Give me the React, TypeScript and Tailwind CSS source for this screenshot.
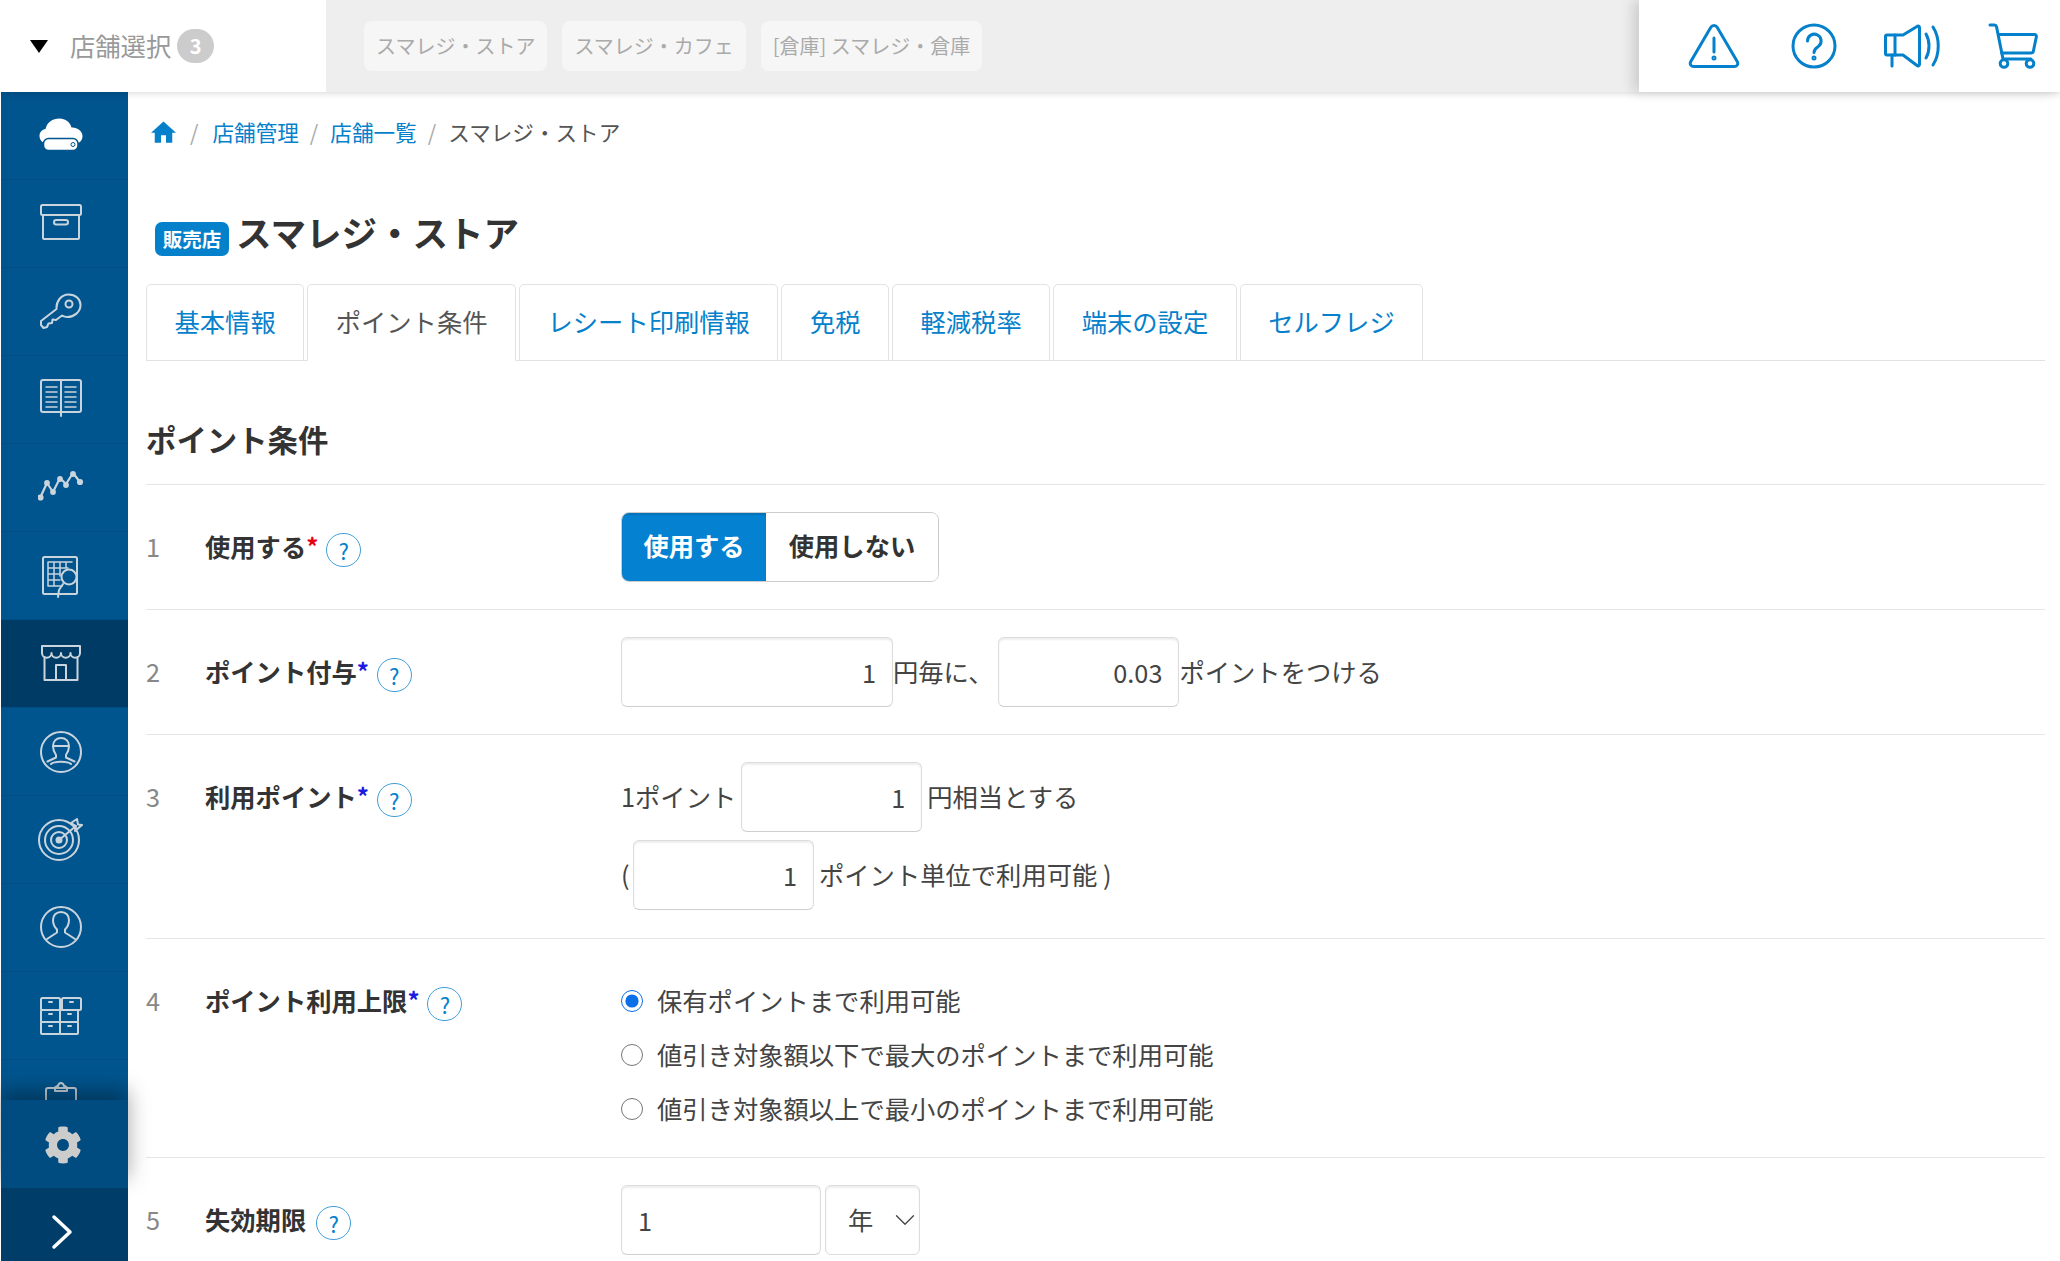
import { ChevronDown } from 'lucide-react'
import { FaCog } from 'react-icons/fa'
import type { ReactNode } from 'react'

const stores = ['スマレジ・ストア', 'スマレジ・カフェ', '[倉庫] スマレジ・倉庫']
const tabs = ['基本情報', 'ポイント条件', 'レシート印刷情報', '免税', '軽減税率', '端末の設定', 'セルフレジ']

function SideSvg({ w, h, children }: { w: number; h: number; children: ReactNode }) {
  return (
    <svg width={w} height={h} viewBox={`0 0 ${w} ${h}`} fill="none" stroke="currentColor" strokeWidth="2" strokeLinecap="round" strokeLinejoin="round">
      {children}
    </svg>
  )
}

const sideIcons: { key: string; pad: string; active?: boolean; white?: boolean; node: ReactNode }[] = [
  {
    key: 'cloud',
    pad: 'pb-[2px]',
    white: true,
    node: (
      <svg width="44" height="33" viewBox="0 0 44 33">
        <path fill="currentColor" d="M7 25C3 25 .5 21.500.5 18c0-4 2.500-6.500 6-7C8 4.500 13.500.5 20.500.5c6 0 10.500 3.500 12 9 5.500-.5 11 3.500 11 8.500 0 3.500-2 7-6 7z" />
        <rect x="4.500" y="20.500" width="34.500" height="12" rx="5" fill="currentColor" stroke="#00558f" strokeWidth="1.500" />
        <circle cx="34" cy="26.500" r="2" fill="none" stroke="#00558f" strokeWidth="1" />
      </svg>
    ),
  },
  {
    key: 'box',
    pad: 'pb-[4px]',
    node: (
      <SideSvg w={42} h={36}>
        <rect x="1" y="1" width="40" height="10" rx="1.500" />
        <rect x="3" y="11" width="36" height="24" rx="1" />
        <rect x="14" y="16" width="14" height="4.500" rx="2.200" />
      </SideSvg>
    ),
  },
  {
    key: 'key',
    pad: 'pb-[2px]',
    node: (
      <SideSvg w={42} h={36}>
        <path d="M16.500 16C16 8 21.500 1.500 28.500 1.500c7 0 12 4.500 12 10.500 0 7-6.500 12-13 12-2 0-4-.5-5.500-1.500L16 27l-3.500-.5-.5 3.500-3.500.5L7 34l-3.500 1L1 32v-4z" />
        <circle cx="29" cy="11" r="3.500" />
      </SideSvg>
    ),
  },
  {
    key: 'book',
    pad: 'pb-[4px]',
    node: (
      <SideSvg w={42} h={38}>
        <rect x="1" y="1" width="40" height="32" rx="2" />
        <path d="M21 1v36" />
        <path strokeWidth="1.500" d="M6 8h11M6 13h11M6 18h11M6 23h11M6 28h11M25 8h11M25 13h11M25 18h11M25 23h11M25 28h11" />
      </SideSvg>
    ),
  },
  {
    key: 'chart',
    pad: 'pb-[4px]',
    node: (
      <svg width="46" height="30" viewBox="0 0 46 30" fill="currentColor" stroke="currentColor" strokeWidth="2.200" strokeLinejoin="round">
        <path fill="none" d="M2 27 9 12l6 9 7-14 6 6 7-11 7 9" />
        <circle cx="2.500" cy="26.500" r="2" />
        <circle cx="9" cy="12" r="1.800" />
        <circle cx="15" cy="21" r="1.800" />
        <circle cx="22" cy="8" r="1.800" />
        <circle cx="28" cy="14" r="1.800" />
        <circle cx="35" cy="3" r="1.800" />
        <circle cx="42" cy="11" r="2" />
      </svg>
    ),
  },
  {
    key: 'report',
    pad: 'pt-[2px]',
    node: (
      <SideSvg w={38} h={42}>
        <rect x="1" y="1" width="34" height="37" rx="1.500" />
        <path strokeWidth="1.500" d="M6 6h24M6 6v24h14M6 12h20M6 18h12M6 24h12M12 6v24M18 6v14M24 6v6" />
        <circle cx="27" cy="21" r="7.500" fill="#00558f" />
        <path d="M21 28l-4 6-1 7" />
      </SideSvg>
    ),
  },
  {
    key: 'store',
    pad: 'pb-[2px]',
    active: true,
    node: (
      <SideSvg w={40} h={38}>
        <path d="M1 2h38v7a4.700 4.700 0 0 1-9.500 0 4.700 4.700 0 0 1-9.500 0 4.700 4.700 0 0 1-9.500 0A4.700 4.700 0 0 1 1 9z" />
        <path d="M3.500 13v23h33V13" />
        <path d="M15 36V21h10v15" />
      </SideSvg>
    ),
  },
  {
    key: 'user',
    pad: 'pb-0',
    node: (
      <SideSvg w={42} h={42}>
        <circle cx="21" cy="21" r="20" />
        <path d="M13 15c0-5 3.500-8 8-8s8 3 8 8c0 4-1.500 7-3 9v2.500l8.500 4M13 15h16M13 15c0 4 1.500 7 3 9v2.500l-8.500 4M11 33c3-3 17-3 20 0" />
      </SideSvg>
    ),
  },
  {
    key: 'target',
    pad: 'pb-0',
    node: (
      <SideSvg w={46} h={43}>
        <circle cx="21" cy="22" r="20" />
        <circle cx="21" cy="22" r="14" />
        <circle cx="21" cy="22" r="8" />
        <circle cx="21" cy="22" r="2.500" fill="currentColor" />
        <path d="M21 22 38 8M33 5l5 3-1 5 7-6-4-.5L39 1z" />
      </SideSvg>
    ),
  },
  {
    key: 'users',
    pad: 'pb-[2px]',
    node: (
      <SideSvg w={42} h={43}>
        <circle cx="21" cy="22" r="20" />
        <path d="M21 7c-5 0-8 3.500-8 8 0 4 1.500 7 4 9.500v3L7 34M21 7c5 0 8 3.500 8 8 0 4-1.500 7-4 9.500v3L35 34" />
      </SideSvg>
    ),
  },
  {
    key: 'grid',
    pad: 'pb-0',
    node: (
      <SideSvg w={42} h={38}>
        <rect x="1" y="1" width="19" height="12" rx="1.500" />
        <rect x="22" y="1" width="19" height="12" rx="1.500" />
        <rect x="1" y="13" width="19" height="12" rx="1" />
        <rect x="20" y="13" width="18" height="12" rx="1" />
        <rect x="1" y="25" width="19" height="12" rx="1" />
        <rect x="20" y="25" width="18" height="12" rx="1" />
        <path d="M9 5h3M30 5h3M9 17h3M28 17h3M9 29h3M28 29h3" />
      </SideSvg>
    ),
  },
  {
    key: 'clipboard',
    pad: 'pb-[4px]',
    node: (
      <SideSvg w={34} h={40}>
        <rect x="2" y="6" width="30" height="33" rx="2" />
        <path d="M11 6c0-1 1-1.500 3-2 .5-2 1.500-3 3-3s2.500 1 3 3c2 .5 3 1 3 2v3H11zM8 20h18" />
      </SideSvg>
    ),
  },
]

function HelpBadge() {
  return (
    <span className="mt-[6px] flex h-[34px] w-[35px] shrink-0 items-center justify-center rounded-full border border-[#3f9fd9] text-[22px] leading-none text-[#0581cc]">
      ?
    </span>
  )
}

function FieldLabel({ no, text, mark }: { no: number; text: string; mark?: 'red' | 'blue' }) {
  return (
    <div className="flex h-[70px] w-[475px] shrink-0 items-center">
      <span className="w-[59px] text-[#888]">{no}</span>
      <span className="font-bold text-[#333]">{text}</span>
      {mark === 'red' && <span className="mb-[2px] w-[10px] text-[24px] font-bold leading-none text-[#e60012]">*</span>}
      {mark === 'blue' && <span className="mb-[2px] w-[10px] text-[24px] font-bold leading-none text-[#1a1ae0]">*</span>}
      <span className="w-[10px]" />
      <HelpBadge />
    </div>
  )
}

function NumInput({ value, width, left }: { value: string; width: string; left?: boolean }) {
  return (
    <input
      readOnly
      value={value}
      className={`h-[70px] ${width} rounded-[6px] border border-[#dcdcdc] border-b-[#cfcfcf] bg-white px-[16px] text-[25.3px] text-[#444] shadow-[inset_0_2px_2px_rgba(0,0,0,0.07)] outline-none ${left ? 'text-left' : 'text-right'}`}
    />
  )
}

function Radio({ label, checked }: { label: string; checked?: boolean }) {
  return (
    <label className="flex h-[54px] items-center gap-[14px]">
      <input type="radio" name="limit" defaultChecked={checked} className="m-0 h-[22px] w-[22px] accent-[#0b6fe8]" />
      <span>{label}</span>
    </label>
  )
}

export default function App() {
  return (
    <div className="flex h-[1261px] w-[2060px] flex-col overflow-hidden bg-white font-['Noto_Sans_CJK_JP',sans-serif] text-[25.3px] text-[#444]">
      <header className="relative z-20 flex h-[92px] shrink-0 bg-[#eeeeee] shadow-[0_1px_7px_rgba(0,0,0,0.16)]">
        <div className="flex w-[326px] items-center bg-white pl-[30px]">
          <svg width="18" height="13" viewBox="0 0 18 13" className="mr-[22px]">
            <path d="M0 0h18L9 13z" fill="#000" />
          </svg>
          <span className="mr-[6px] text-[#999]">店舗選択</span>
          <span className="flex h-[34px] w-[37px] items-center justify-center rounded-full bg-[#cccccc] text-[20px] font-bold text-white">3</span>
        </div>
        <div className="flex flex-1 items-center gap-[15px] pl-[38px]">
          {stores.map((s) => (
            <span key={s} className="flex h-[50px] items-center rounded-[8px] bg-[#f6f6f6] px-[12px] text-[20px] text-[#aaaaaa]">
              {s}
            </span>
          ))}
        </div>
        <div className="relative flex w-[421px] items-center bg-white pl-[49px] text-[#0581cc] shadow-[-6px_0_12px_rgba(0,0,0,0.14)]">
          <svg width="52" height="46" viewBox="0 0 52 46" fill="none" stroke="currentColor" strokeWidth="3" strokeLinecap="round" strokeLinejoin="round" className="mr-[51px]">
            <path d="M26 2.500c-1.500 0-2.600.8-3.300 2L2.800 38.500c-1.500 2.600.3 5 3 5h40.400c2.700 0 4.500-2.400 3-5L29.300 4.500c-.7-1.200-1.800-2-3.300-2z" />
            <path d="M26 15v14" />
            <circle cx="26" cy="35" r="1" />
          </svg>
          <svg width="46" height="46" viewBox="0 0 46 46" fill="none" stroke="currentColor" strokeWidth="3" strokeLinecap="round" strokeLinejoin="round" className="mr-[47px]">
            <circle cx="23" cy="23" r="21" />
            <path d="M16.500 18a6.800 6.800 0 1 1 10.500 5.700c-2.400 1.600-4 2.800-4 5.800" />
            <circle cx="23" cy="35" r="1" />
          </svg>
          <svg width="60" height="44" viewBox="0 0 60 44" fill="none" stroke="currentColor" strokeWidth="3" strokeLinecap="round" strokeLinejoin="round" className="mr-[44px]">
            <path d="M3 11h16L33 2.500c1-.8 2.500-.3 2.500 1.200v36.600c0 1.500-1.500 2-2.500 1.200L19 31H3c-.8 0-1.500-.7-1.500-1.500v-17C1.500 11.700 2.200 11 3 11z" />
            <path d="M11 11v20M8 31v11" />
            <path d="M42 10c4 7 4 17 0 24M49 3c7 11 7 27 0 38" />
          </svg>
          <svg width="51" height="46" viewBox="0 0 51 46" fill="none" stroke="currentColor" strokeWidth="3" strokeLinecap="round" strokeLinejoin="round">
            <path d="M2 2h4.500c1 0 1.700.6 2 1.600L15 36h28" />
            <path d="M10.500 11.500h36c1.400 0 2.200 1.200 1.800 2.500l-3 14.500c-.3 1-1 1.500-2 1.500H13.800" />
            <circle cx="16" cy="40.500" r="3.800" />
            <circle cx="42" cy="40.500" r="3.800" />
          </svg>
        </div>
      </header>

      <div className="flex min-h-0 flex-1">
        <aside className="ml-px flex w-[127px] shrink-0 flex-col bg-[#00558f] text-[#c9d4dd]">
          <nav className="h-[1008px] shrink-0 overflow-hidden">
            {sideIcons.map((item) => (
              <div
                key={item.key}
                className={`flex h-[88px] items-center justify-center border-b border-[#004f86] pr-[7px] ${item.pad} ${item.active ? 'bg-[#003b66]' : ''} ${item.white ? 'text-white' : ''}`}
              >
                {item.node}
              </div>
            ))}
          </nav>
          <div className="relative z-10 flex h-[88px] shrink-0 items-center justify-center bg-[#004c80] pt-[2px] pr-[3px] text-[#cccccc] shadow-[0_-10px_20px_rgba(0,0,0,0.35)]">
            <FaCog size={38} />
          </div>
          <div className="relative z-10 flex h-[88px] shrink-0 items-center justify-center bg-[#003d69] pr-[6px]">
            <svg width="22" height="36" viewBox="0 0 22 36" fill="none" stroke="#ffffff" strokeWidth="3.500" strokeLinecap="round" strokeLinejoin="round">
              <path d="M3 3l16 15L3 33" />
            </svg>
          </div>
        </aside>

        <main className="min-w-0 flex-1 pl-[18px] pr-[15px]">
          <nav className="mt-[25px] flex h-[30px] items-center pl-[5px] text-[21.6px]">
            <svg width="25" height="22" viewBox="2 3 20 17" fill="#0581cc" className="mr-[14px]">
              <path d="M10 20v-6h4v6h5v-8h3L12 3 2 12h3v8z" />
            </svg>
            <span className="mr-[14px] text-[#aaaaaa]">/</span>
            <span className="mr-[11px] text-[#0581cc]">店舗管理</span>
            <span className="mr-[12px] text-[#aaaaaa]">/</span>
            <span className="mr-[11px] text-[#0581cc]">店舗一覧</span>
            <span className="mr-[12px] text-[#aaaaaa]">/</span>
            <span className="text-[#555555]">スマレジ・ストア</span>
          </nav>

          <div className="mt-[60px] flex h-[50px] items-center pl-[9px]">
            <span className="mt-[13px] mr-[7px] flex h-[34px] w-[74px] items-center justify-center rounded-[7px] bg-[#0581cc] text-[19.500px] font-bold text-white">販売店</span>
            <h1 className="text-[35.500px] font-bold text-[#333333]">スマレジ・ストア</h1>
          </div>

          <div className="mt-[27px] flex gap-[3px] border-b border-[#e2e2e2]">
            {tabs.map((t, i) => (
              <div
                key={t}
                className={`-mb-px flex h-[77px] items-center rounded-t-[5px] border border-[#e2e2e2] px-[27.5px] pb-[2px] ${i === 1 ? 'border-b-white text-[#555555]' : 'text-[#0581cc]'}`}
              >
                {t}
              </div>
            ))}
          </div>

          <h2 className="mt-[57px] mb-[22px] flex h-[44px] items-center text-[30.400px] font-bold text-[#333333]">ポイント条件</h2>

          <section className="flex border-t border-[#e6e6e6] pt-[27px] pb-[27px]">
            <FieldLabel no={1} text="使用する" mark="red" />
            <div className="flex h-[70px] w-[318px] overflow-hidden rounded-[8px] border border-[#cccccc]">
              <button className="w-[144px] bg-[#0482d1] pb-[2px] font-bold text-white shadow-[inset_0_2px_2px_rgba(0,0,0,0.12)]">使用する</button>
              <button className="flex-1 bg-white pb-[2px] font-bold text-[#333333]">使用しない</button>
            </div>
          </section>

          <section className="flex border-t border-[#e6e6e6] pt-[27px] pb-[27px]">
            <FieldLabel no={2} text="ポイント付与" mark="blue" />
            <div className="flex items-center">
              <NumInput value="1" width="w-[272px]" />
              <span>円毎に、</span>
              <span className="w-[5px]" />
              <NumInput value="0.03" width="w-[181px]" />
              <span>ポイントをつける</span>
            </div>
          </section>

          <section className="flex border-t border-[#e6e6e6] pt-[27px] pb-[28px]">
            <FieldLabel no={3} text="利用ポイント" mark="blue" />
            <div className="flex flex-col gap-[8px]">
              <div className="flex items-center gap-[5px]">
                <span>1ポイント</span>
                <NumInput value="1" width="w-[181px]" />
                <span>円相当とする</span>
              </div>
              <div className="flex items-center gap-[5px]">
                <span className="w-[7px]">(</span>
                <NumInput value="1" width="w-[181px]" />
                <span>ポイント単位で利用可能 )</span>
              </div>
            </div>
          </section>

          <section className="flex border-t border-[#e6e6e6] pt-[27px] pb-[21px]">
            <FieldLabel no={4} text="ポイント利用上限" mark="blue" />
            <div className="mt-[8px] flex flex-col">
              <Radio checked label="保有ポイントまで利用可能" />
              <Radio label="値引き対象額以下で最大のポイントまで利用可能" />
              <Radio label="値引き対象額以上で最小のポイントまで利用可能" />
            </div>
          </section>

          <section className="flex border-t border-[#e6e6e6] pt-[27px]">
            <FieldLabel no={5} text="失効期限" />
            <div className="flex items-center gap-[4px]">
              <NumInput value="1" width="w-[200px]" left />
              <div className="relative h-[70px] w-[95px]">
                <select className="h-full w-full appearance-none rounded-[6px] border border-[#dcdcdc] bg-white pl-[22px] text-[25.3px] text-[#444] shadow-[inset_0_2px_2px_rgba(0,0,0,0.07)] outline-none">
                  <option>年</option>
                </select>
                <ChevronDown size={34} strokeWidth={0.900} className="pointer-events-none absolute right-[-2px] top-[18px] text-[#444]" />
              </div>
            </div>
          </section>
        </main>
      </div>
    </div>
  )
}
